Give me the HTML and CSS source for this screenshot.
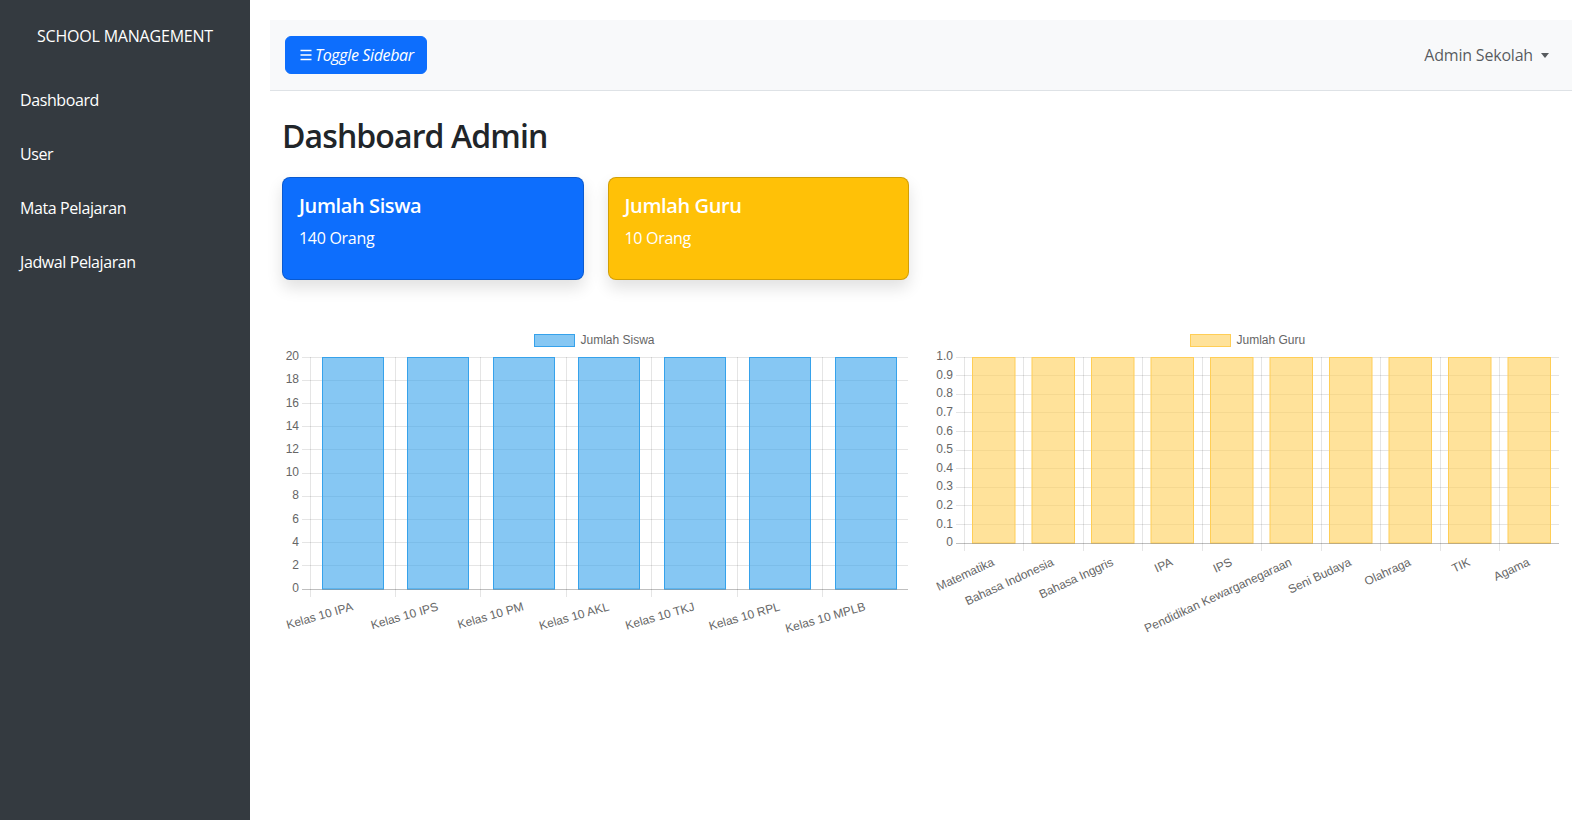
FILE: index.html
```html
<!DOCTYPE html>
<html lang="id">
<head>
<meta charset="utf-8">
<title>Dashboard Admin</title>
<link rel="stylesheet" href="styles.css">
</head>
<body>
<aside class="sidebar">
  <div class="brand">SCHOOL MANAGEMENT</div>
  <nav class="side-nav">
    <a href="#">Dashboard</a>
    <a href="#">User</a>
    <a href="#">Mata Pelajaran</a>
    <a href="#">Jadwal Pelajaran</a>
  </nav>
</aside>
<main class="main">
  <header class="topbar">
    <button class="btn-toggle" type="button">
      <svg class="bars" width="12" height="12" viewBox="0 0 12 12"><path d="M0.5 1.5H11.5M0.5 6H11.5M0.5 10.5H11.5" stroke="#fff" stroke-width="1.6" fill="none"/></svg><span>Toggle Sidebar</span>
    </button>
    <div class="user-menu">Admin Sekolah<span class="caret"></span></div>
  </header>

  <section class="content">
    <h2 class="page-title">Dashboard Admin</h2>

    <div class="card-row">
      <div class="stat-card stat-blue">
        <h5 class="stat-title">Jumlah Siswa</h5>
        <p class="stat-value">140 Orang</p>
      </div>
      <div class="stat-card stat-yellow">
        <h5 class="stat-title">Jumlah Guru</h5>
        <p class="stat-value">10 Orang</p>
      </div>
    </div>

    <div class="chart-row">
      <div class="chart-col">
        <svg class="chart" width="627" height="314" viewBox="0 0 627 314">
          <g class="legend">
            <rect x="252.5" y="10.5" width="40" height="12" fill="rgba(54,162,235,0.6)" stroke="rgb(54,162,235)" stroke-width="1"/>
            <text x="298.5" y="17" dominant-baseline="middle">Jumlah Siswa</text>
          </g>
          <g class="grid">
            <line x1="20" y1="33.5" x2="626" y2="33.5"/>
            <line x1="20" y1="56.5" x2="626" y2="56.5"/>
            <line x1="20" y1="79.5" x2="626" y2="79.5"/>
            <line x1="20" y1="102.5" x2="626" y2="102.5"/>
            <line x1="20" y1="125.5" x2="626" y2="125.5"/>
            <line x1="20" y1="149.5" x2="626" y2="149.5"/>
            <line x1="20" y1="172.5" x2="626" y2="172.5"/>
            <line x1="20" y1="195.5" x2="626" y2="195.5"/>
            <line x1="20" y1="218.5" x2="626" y2="218.5"/>
            <line x1="20" y1="241.5" x2="626" y2="241.5"/>
            <line x1="28.5" y1="33" x2="28.5" y2="273"/>
            <line x1="113.5" y1="33" x2="113.5" y2="273"/>
            <line x1="198.5" y1="33" x2="198.5" y2="273"/>
            <line x1="284.5" y1="33" x2="284.5" y2="273"/>
            <line x1="369.5" y1="33" x2="369.5" y2="273"/>
            <line x1="455.5" y1="33" x2="455.5" y2="273"/>
            <line x1="540.5" y1="33" x2="540.5" y2="273"/>
          </g>
          <g fill="rgba(54,162,235,0.6)" stroke="rgb(54,162,235)" stroke-width="1">
            <rect x="40.5" y="33.5" width="61" height="231.5"/>
            <rect x="125.5" y="33.5" width="61" height="231.5"/>
            <rect x="211.5" y="33.5" width="61" height="231.5"/>
            <rect x="296.5" y="33.5" width="61" height="231.5"/>
            <rect x="382.5" y="33.5" width="61" height="231.5"/>
            <rect x="467.5" y="33.5" width="61" height="231.5"/>
            <rect x="553.5" y="33.5" width="61" height="231.5"/>
          </g>
          <line class="zero" x1="20" y1="265.5" x2="626" y2="265.5"/>
          <g class="ylabels" text-anchor="end">
            <text x="17" y="33" dominant-baseline="middle">20</text>
            <text x="17" y="56.2" dominant-baseline="middle">18</text>
            <text x="17" y="79.4" dominant-baseline="middle">16</text>
            <text x="17" y="102.6" dominant-baseline="middle">14</text>
            <text x="17" y="125.8" dominant-baseline="middle">12</text>
            <text x="17" y="149" dominant-baseline="middle">10</text>
            <text x="17" y="172.2" dominant-baseline="middle">8</text>
            <text x="17" y="195.4" dominant-baseline="middle">6</text>
            <text x="17" y="218.6" dominant-baseline="middle">4</text>
            <text x="17" y="241.8" dominant-baseline="middle">2</text>
            <text x="17" y="265" dominant-baseline="middle">0</text>
          </g>
          <g class="xlabels" text-anchor="end">
            <text transform="translate(70.7 283) rotate(-16)" dominant-baseline="middle">Kelas 10 IPA</text>
            <text transform="translate(156.1 283) rotate(-16)" dominant-baseline="middle">Kelas 10 IPS</text>
            <text transform="translate(241.6 283) rotate(-16)" dominant-baseline="middle">Kelas 10 PM</text>
            <text transform="translate(327 283) rotate(-16)" dominant-baseline="middle">Kelas 10 AKL</text>
            <text transform="translate(412.4 283) rotate(-16)" dominant-baseline="middle">Kelas 10 TKJ</text>
            <text transform="translate(497.9 283) rotate(-16)" dominant-baseline="middle">Kelas 10 RPL</text>
            <text transform="translate(583.3 283) rotate(-16)" dominant-baseline="middle">Kelas 10 MPLB</text>
          </g>
        </svg>
      </div>
      <div class="chart-col">
        <svg class="chart" width="627" height="314" viewBox="0 0 627 314">
          <g class="legend">
            <rect x="257.5" y="10.5" width="40" height="12" fill="rgba(255,206,86,0.6)" stroke="rgb(255,206,86)" stroke-width="1"/>
            <text x="303.5" y="17" dominant-baseline="middle">Jumlah Guru</text>
          </g>
          <g class="grid">
            <line x1="23" y1="33.5" x2="626" y2="33.5"/>
            <line x1="23" y1="51.5" x2="626" y2="51.5"/>
            <line x1="23" y1="70.5" x2="626" y2="70.5"/>
            <line x1="23" y1="88.5" x2="626" y2="88.5"/>
            <line x1="23" y1="107.5" x2="626" y2="107.5"/>
            <line x1="23" y1="126.5" x2="626" y2="126.5"/>
            <line x1="23" y1="144.5" x2="626" y2="144.5"/>
            <line x1="23" y1="163.5" x2="626" y2="163.5"/>
            <line x1="23" y1="181.5" x2="626" y2="181.5"/>
            <line x1="23" y1="200.5" x2="626" y2="200.5"/>
            <line x1="31.5" y1="33" x2="31.5" y2="227"/>
            <line x1="90.5" y1="33" x2="90.5" y2="227"/>
            <line x1="150.5" y1="33" x2="150.5" y2="227"/>
            <line x1="209.5" y1="33" x2="209.5" y2="227"/>
            <line x1="269.5" y1="33" x2="269.5" y2="227"/>
            <line x1="328.5" y1="33" x2="328.5" y2="227"/>
            <line x1="388.5" y1="33" x2="388.5" y2="227"/>
            <line x1="447.5" y1="33" x2="447.5" y2="227"/>
            <line x1="507.5" y1="33" x2="507.5" y2="227"/>
            <line x1="566.5" y1="33" x2="566.5" y2="227"/>
          </g>
          <g fill="rgba(255,206,86,0.6)" stroke="rgb(255,206,86)" stroke-width="1">
            <rect x="39.5" y="33.5" width="42.5" height="185.5"/>
            <rect x="99" y="33.5" width="42.5" height="185.5"/>
            <rect x="158.5" y="33.5" width="42.5" height="185.5"/>
            <rect x="218" y="33.5" width="42.5" height="185.5"/>
            <rect x="277.5" y="33.5" width="42.5" height="185.5"/>
            <rect x="337" y="33.5" width="42.5" height="185.5"/>
            <rect x="396.5" y="33.5" width="42.5" height="185.5"/>
            <rect x="456" y="33.5" width="42.5" height="185.5"/>
            <rect x="515.5" y="33.5" width="42.5" height="185.5"/>
            <rect x="575" y="33.5" width="42.5" height="185.5"/>
          </g>
          <line class="zero" x1="23" y1="219.5" x2="626" y2="219.5"/>
          <g class="ylabels" text-anchor="end">
            <text x="20" y="33" dominant-baseline="middle">1.0</text>
            <text x="20" y="51.6" dominant-baseline="middle">0.9</text>
            <text x="20" y="70.2" dominant-baseline="middle">0.8</text>
            <text x="20" y="88.8" dominant-baseline="middle">0.7</text>
            <text x="20" y="107.4" dominant-baseline="middle">0.6</text>
            <text x="20" y="126" dominant-baseline="middle">0.5</text>
            <text x="20" y="144.6" dominant-baseline="middle">0.4</text>
            <text x="20" y="163.2" dominant-baseline="middle">0.3</text>
            <text x="20" y="181.8" dominant-baseline="middle">0.2</text>
            <text x="20" y="200.4" dominant-baseline="middle">0.1</text>
            <text x="20" y="219" dominant-baseline="middle">0</text>
          </g>
          <g class="xlabels" text-anchor="end">
            <text transform="translate(60.75 238) rotate(-25)" dominant-baseline="middle">Matematika</text>
            <text transform="translate(120.25 238) rotate(-25)" dominant-baseline="middle">Bahasa Indonesia</text>
            <text transform="translate(179.75 238) rotate(-25)" dominant-baseline="middle">Bahasa Inggris</text>
            <text transform="translate(239.25 238) rotate(-25)" dominant-baseline="middle">IPA</text>
            <text transform="translate(298.75 238) rotate(-25)" dominant-baseline="middle">IPS</text>
            <text transform="translate(358.25 238) rotate(-25)" dominant-baseline="middle">Pendidikan Kewarganegaraan</text>
            <text transform="translate(417.75 238) rotate(-25)" dominant-baseline="middle">Seni Budaya</text>
            <text transform="translate(477.25 238) rotate(-25)" dominant-baseline="middle">Olahraga</text>
            <text transform="translate(536.75 238) rotate(-25)" dominant-baseline="middle">TIK</text>
            <text transform="translate(596.25 238) rotate(-25)" dominant-baseline="middle">Agama</text>
          </g>
        </svg>
      </div>
    </div>
  </section>
</main>
</body>
</html>
```

FILE: styles.css
```css
* { box-sizing: border-box; }

html, body {
  margin: 0;
  padding: 0;
}

body {
  display: flex;
  min-height: 100vh;
  font-family: "Open Sans", "Noto Sans", "Liberation Sans", sans-serif;
  font-size: 16px;
  line-height: 1.5;
  color: #212529;
  background: #fff;
}

/* ---------- sidebar ---------- */
.sidebar {
  width: 250px;
  flex: 0 0 250px;
  min-height: 100vh;
  background: #343a40;
  color: #fff;
}

.brand {
  padding-top: 24px;
  font-size: 16px;
  line-height: 24px;
  letter-spacing: -0.2px;
  text-align: center;
  color: #fff;
}

.side-nav {
  display: flex;
  flex-direction: column;
  margin-top: 25px;
}

.side-nav a {
  display: block;
  padding: 15px 20px;
  line-height: 24px;
  font-size: 16px;
  letter-spacing: -0.4px;
  color: #fff;
  text-decoration: none;
}

/* ---------- main ---------- */
.main {
  flex: 1;
  min-width: 0;
  padding: 20px;
}

.topbar {
  height: 71px;
  display: flex;
  align-items: center;
  justify-content: space-between;
  padding: 0 23px 0 15px;
  background: #f8f9fa;
  border-bottom: 1px solid #dee2e6;
}

.btn-toggle {
  display: inline-flex;
  align-items: center;
  height: 38px;
  padding: 0 12px 0 14px;
  border: 1px solid #0d6efd;
  border-radius: 6px;
  background: #0d6efd;
  color: #fff;
  font-family: inherit;
  font-size: 16px;
  font-style: italic;
  line-height: 24px;
  letter-spacing: -0.35px;
  cursor: pointer;
}

.bars {
  display: block;
  margin-right: 3px;
}

.user-menu {
  display: flex;
  align-items: center;
  font-size: 16px;
  letter-spacing: -0.2px;
  color: rgba(33, 37, 41, 0.75);
}

.caret {
  display: inline-block;
  margin-left: 8px;
  border-top: 5px solid rgba(33, 37, 41, 0.75);
  border-left: 4px solid transparent;
  border-right: 4px solid transparent;
}

.content {
  padding: 0 12px;
}

.page-title {
  margin: 26px 0 8px;
  font-size: 32px;
  font-weight: 600;
  line-height: 1.2;
  letter-spacing: -0.9px;
  color: #212529;
}

.card-row {
  display: flex;
  gap: 24px;
  margin-top: 22px;
}

.stat-card {
  width: 301.5px;
  padding: 16px 16px 16px;
  border: 1px solid rgba(0, 0, 0, 0.175);
  border-radius: 8px;
  box-shadow: 0 0.5rem 1rem rgba(0, 0, 0, 0.12);
  color: #fff;
}

.stat-blue { background: #0d6efd; }
.stat-yellow { background: #ffc107; }

.stat-title {
  margin: 0 0 8px;
  font-size: 20px;
  font-weight: 600;
  line-height: 24px;
  letter-spacing: -0.4px;
}

.stat-value {
  margin: 0 0 13px;
  font-size: 16px;
  line-height: 24px;
  letter-spacing: -0.3px;
}

.chart-row {
  display: flex;
  gap: 24px;
  margin-top: 44px;
}

.chart-col {
  flex: 1 1 0;
  min-width: 0;
}

.chart {
  display: block;
  font-family: "Liberation Sans", Arial, sans-serif;
  font-size: 12px;
}

.chart text {
  fill: #666;
}

.chart .grid line {
  stroke: rgba(0, 0, 0, 0.1);
  stroke-width: 1;
}

.chart .zero {
  stroke: rgba(0, 0, 0, 0.25);
  stroke-width: 1;
}
```
